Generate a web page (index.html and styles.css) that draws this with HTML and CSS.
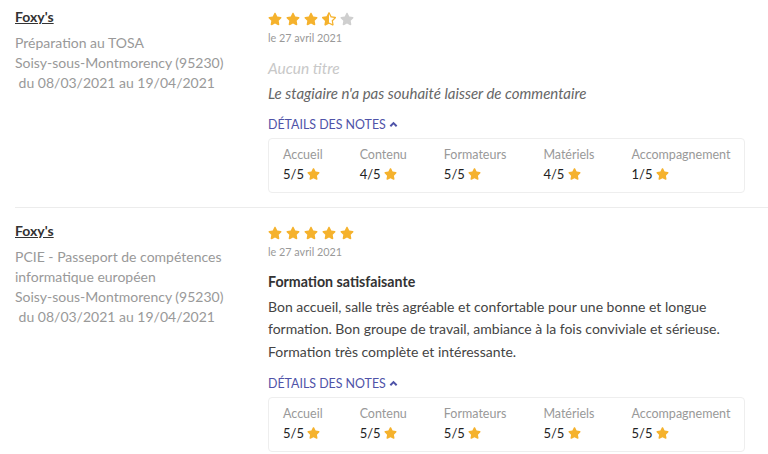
FILE: index.html
```html
<!DOCTYPE html>
<html lang="fr">
<head>
    <meta charset="UTF-8">
    <meta name="viewport" content="width=device-width, initial-scale=1.0">
    <title>Avis des stagiaires</title>
    <link rel="stylesheet" href="styles.css">
</head>
<body>
    <svg class="defs" width="0" height="0">
        <symbol id="star" viewBox="0 0 576 512">
            <path d="M259.3 17.8L194 150.2 47.9 171.5c-26.2 3.8-36.7 36.1-17.7 54.6l105.7 103-25 145.5c-4.5 26.3 23.2 46 46.4 33.7L288 439.6l130.7 68.7c23.2 12.2 50.9-7.4 46.4-33.7l-25-145.5 105.7-103c19-18.5 8.5-50.8-17.7-54.6L382 150.2 316.7 17.8c-11.7-23.6-45.6-23.9-57.4 0z"/>
        </symbol>
        <symbol id="star-half" viewBox="0 0 536 512">
            <path d="M508.55 171.51L362.18 150.2 296.77 17.81C290.89 5.98 279.42 0 267.95 0c-11.4 0-22.790 5.9-28.69 17.81l-65.43 132.38-146.38 21.29c-26.25 3.8-36.77 36.09-17.74 54.59l105.89 103-25.06 145.48C86.98 495.33 103.57 512 122.15 512c4.93 0 10-1.17 14.87-3.75l130.95-68.68 130.94 68.7c4.86 2.55 9.92 3.71 14.83 3.71 18.6 0 35.22-16.61 31.66-37.4l-25.03-145.49 105.91-102.98c19.04-18.5 8.52-50.8-17.73-54.6zm-121.74 123.2l-18.12 17.62 4.28 24.88 19.52 113.45-102.13-53.59-22.38-11.74 0.03-317.19 51.03 103.29 11.18 22.63 25.01 3.64 114.23 16.63-82.65 80.38z"/>
        </symbol>
    </svg>

    <div class="reviews">
        <!-- avis 1 -->
        <div class="review">
            <div class="review-info">
                <a class="org" href="#">Foxy's</a>
                <p class="info">Préparation au TOSA</p>
                <p class="info">Soisy-sous-Montmorency (95230)</p>
                <p class="info">&nbsp;du 08/03/2021 au 19/04/2021</p>
            </div>
            <div class="review-body">
                <div class="stars">
                    <svg class="star"><use href="#star"/></svg>
                    <svg class="star"><use href="#star"/></svg>
                    <svg class="star"><use href="#star"/></svg>
                    <svg class="star"><use href="#star-half"/></svg>
                    <svg class="star off"><use href="#star"/></svg>
                </div>
                <div class="date">le 27 avril 2021</div>
                <h3 class="title empty">Aucun titre</h3>
                <p class="comment empty">Le stagiaire n'a pas souhaité laisser de commentaire</p>
                <a class="details-link" href="#">DÉTAILS DES NOTES
                    <svg class="caret" viewBox="0 0 10 7"><polyline points="1.5,5.5 5,2 8.5,5.5"/></svg>
                </a>
                <div class="notes">
                    <div class="note"><span class="note-label">Accueil</span><span class="note-value">5/5&nbsp;<svg class="mini-star"><use href="#star"/></svg></span></div>
                    <div class="note"><span class="note-label">Contenu</span><span class="note-value">4/5&nbsp;<svg class="mini-star"><use href="#star"/></svg></span></div>
                    <div class="note"><span class="note-label">Formateurs</span><span class="note-value">5/5&nbsp;<svg class="mini-star"><use href="#star"/></svg></span></div>
                    <div class="note"><span class="note-label">Matériels</span><span class="note-value">4/5&nbsp;<svg class="mini-star"><use href="#star"/></svg></span></div>
                    <div class="note"><span class="note-label">Accompagnement</span><span class="note-value">1/5&nbsp;<svg class="mini-star"><use href="#star"/></svg></span></div>
                </div>
            </div>
        </div>

        <!-- avis 2 -->
        <div class="review">
            <div class="review-info">
                <a class="org" href="#">Foxy's</a>
                <p class="info">PCIE - Passeport de compétences informatique européen</p>
                <p class="info">Soisy-sous-Montmorency (95230)</p>
                <p class="info">&nbsp;du 08/03/2021 au 19/04/2021</p>
            </div>
            <div class="review-body">
                <div class="stars">
                    <svg class="star"><use href="#star"/></svg>
                    <svg class="star"><use href="#star"/></svg>
                    <svg class="star"><use href="#star"/></svg>
                    <svg class="star"><use href="#star"/></svg>
                    <svg class="star"><use href="#star"/></svg>
                </div>
                <div class="date">le 27 avril 2021</div>
                <h3 class="title">Formation satisfaisante</h3>
                <p class="comment">Bon accueil, salle très agréable et confortable pour une bonne et longue formation. Bon groupe de travail, ambiance à la fois conviviale et sérieuse. Formation très complète et intéressante.</p>
                <a class="details-link" href="#">DÉTAILS DES NOTES
                    <svg class="caret" viewBox="0 0 10 7"><polyline points="1.5,5.5 5,2 8.5,5.5"/></svg>
                </a>
                <div class="notes">
                    <div class="note"><span class="note-label">Accueil</span><span class="note-value">5/5&nbsp;<svg class="mini-star"><use href="#star"/></svg></span></div>
                    <div class="note"><span class="note-label">Contenu</span><span class="note-value">5/5&nbsp;<svg class="mini-star"><use href="#star"/></svg></span></div>
                    <div class="note"><span class="note-label">Formateurs</span><span class="note-value">5/5&nbsp;<svg class="mini-star"><use href="#star"/></svg></span></div>
                    <div class="note"><span class="note-label">Matériels</span><span class="note-value">5/5&nbsp;<svg class="mini-star"><use href="#star"/></svg></span></div>
                    <div class="note"><span class="note-label">Accompagnement</span><span class="note-value">5/5&nbsp;<svg class="mini-star"><use href="#star"/></svg></span></div>
                </div>
            </div>
        </div>
    </div>
</body>
</html>
```

FILE: styles.css
```css
/* Page */
body {
    font-family: Lato, "Open Sans", sans-serif;
    background-color: #fff;
    color: #333;
    margin: 0;
    padding: 0;
}

.defs {
    position: absolute;
    width: 0;
    height: 0;
}

/* Un avis */
.review {
    display: flex;
    gap: 23px;
    margin-left: 15px;
    padding: 13px 23px 14px 0;
    border-bottom: 1px solid #ececec;
}

.review:first-child {
    padding-top: 7px;
}

/* Colonne de gauche */
.review-info {
    width: 230px;
    flex-shrink: 0;
}

.org {
    display: block;
    font-size: 14px;
    line-height: 20px;
    font-weight: bold;
    color: #333;
    text-decoration: underline;
    margin-bottom: 6px;
}

.info {
    margin: 0;
    font-size: 14px;
    line-height: 20px;
    color: #999;
}

/* Colonne de droite */
.review-body {
    flex: 1;
    min-width: 0;
    padding-top: 5px;
}

.stars {
    display: flex;
    gap: 4px;
    height: 14px;
    margin-bottom: 4px;
}

.star {
    width: 14px;
    height: 14px;
    fill: #f5b22d;
}

.star.off {
    fill: #cfcfcf;
}

.date {
    font-size: 10.8px;
    line-height: 16px;
    color: #999;
}

.title {
    margin: 12px 0 0;
    font-size: 14.2px;
    line-height: 20px;
    font-weight: bold;
    color: #333;
}

.comment {
    margin: 4px 0 0;
    font-size: 14px;
    line-height: 22.7px;
    color: #444;
}

.title.empty {
    font-size: 15.5px;
    font-weight: normal;
    font-style: italic;
    color: #c8c8c8;
}

.comment.empty {
    font-size: 15px;
    font-style: italic;
    color: #666;
}

/* Détails des notes */
.details-link {
    display: inline-flex;
    align-items: center;
    gap: 3px;
    margin-top: 11px;
    font-size: 12.4px;
    line-height: 18px;
    color: #4f53a8;
    text-decoration: none;
}

.caret {
    width: 9px;
    height: 7px;
    fill: none;
    stroke: #4f53a8;
    stroke-width: 2.2;
}

.notes {
    display: flex;
    gap: 37px;
    margin-top: 4px;
    padding: 6px 14px 7px;
    border: 1px solid #eee;
    border-radius: 4px;
}

.note {
    display: flex;
    flex-direction: column;
}

.note-label {
    font-size: 12.5px;
    line-height: 19px;
    color: #999;
}

.note-value {
    display: flex;
    align-items: center;
    font-size: 13px;
    line-height: 21px;
    color: #222;
}

.mini-star {
    width: 13px;
    height: 12px;
    fill: #f5b22d;
}
```
